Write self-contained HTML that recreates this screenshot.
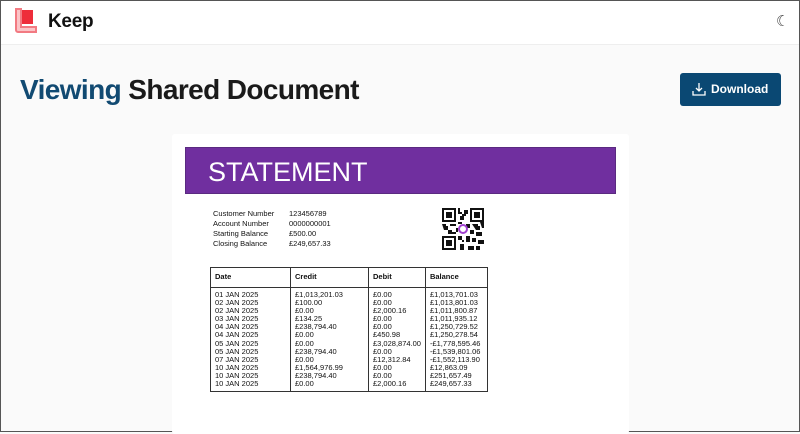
<!DOCTYPE html>
<html><head><meta charset="utf-8"><style>
*{margin:0;padding:0;box-sizing:border-box}
body{width:800px;height:432px;overflow:hidden;background:#fafafa;font-family:"Liberation Sans",Arial,sans-serif;position:relative;border:1px solid #555}
.hdr{position:absolute;left:0;top:0;width:798px;height:44px;background:#fff;border-bottom:1px solid #eee}
.keep{position:absolute;left:47px;top:10px;font-size:19px;font-weight:bold;color:#111;letter-spacing:-0.3px}
.moon{position:absolute;left:775px;top:11px;font-size:15px;color:#444}
h1{position:absolute;left:19px;top:73px;font-size:28px;font-weight:bold;color:#1a1a1a;letter-spacing:-0.6px}
h1 span{color:#114a72}
.btn{position:absolute;left:679px;top:72px;width:101px;height:33px;background:#0a4873;border-radius:3px;color:#fff;font-size:12px;font-weight:bold}
.btn b{position:absolute;left:31px;top:9px}
.card{position:absolute;left:171px;top:133px;width:457px;height:300px;background:#fff;border-radius:3px}
.ban{position:absolute;left:13px;top:13px;width:431px;height:47px;background:#702f9f;border:1px solid #5a2a80}
.ban span{position:absolute;left:22px;top:9px;color:#fff;font-size:27px}
.info{position:absolute;font-size:7.5px;color:#111;line-height:10px}
table{position:absolute;left:38px;top:133px;border-collapse:collapse;font-size:7.5px;color:#111}
td,th{border:1px solid #333;text-align:left;vertical-align:top;padding:0 4px;line-height:8.1px}
th{height:20px;vertical-align:middle;font-weight:bold}
td{padding-top:3px;padding-bottom:3px}
</style></head><body>
<div class="hdr">
<svg style="position:absolute;left:12px;top:6px" width="26" height="28" viewBox="0 0 26 28"><path d="M3 2h5v18h15v5H5a2 2 0 0 1-2-2z" fill="#fbc4c7" stroke="#f27a82" stroke-width="2"/><rect x="9" y="3" width="11" height="14" fill="#ee2d3a"/></svg>
<div class="keep">Keep</div><div class="moon">☾</div></div>
<h1><span>Viewing</span> Shared Document</h1>
<div class="btn"><svg style="position:absolute;left:12px;top:9px" width="14" height="14" viewBox="0 0 14 14" fill="none" stroke="#fff" stroke-width="1.3"><path d="M7 1v8M4 6l3 3 3-3M1 9v4h12V9"/></svg><b>Download</b></div>
<div class="card">
<div class="ban"><span>STATEMENT</span></div>
<div class="info" style="left:41px;top:75px">Customer Number<br>Account Number<br>Starting Balance<br>Closing Balance</div>
<div class="info" style="left:117px;top:75px">123456789<br>0000000001<br>£500.00<br>£249,657.33</div>
<svg style="position:absolute;left:270px;top:74px" width="42" height="42" viewBox="0 0 21 21"><g fill="#111"><path d="M0 0h7v7H0zM14 0h7v7h-7zM0 14h7v7H0z"/></g><g fill="#fff"><path d="M1 1h5v5H1zM15 1h5v5h-5zM1 15h5v5H1z"/></g><g fill="#111"><path d="M2 2h3v3H2zM16 2h3v3h-3zM2 16h3v3H2zM8 0h1v2h1v1H8zM11 1h2v2h-1v1h-1zM9 4h2v2H9zM8 7h2v1H8zM0 8h2v1h1v2H1zM4 8h3v1H4zM12 8h2v2h-2zM15 8h3v1h1v2h-2zM19 7h2v3h-1zM3 11h2v2H3zM14 11h2v2h-2zM17 12h3v2h-3zM8 14h2v2H8zM12 14h2v3h-2zM15 15h2v2h-2zM18 16h3v2h-3zM9 18h2v3H9zM13 19h3v2h-3zM17 19h2v2h-2zM10 3h1v1h-1zM7 10h1v2H7zM5 12h2v1H5zM10 16h1v1h-1zM15 4h-1v2h1z"/></g><circle cx="10.5" cy="10.5" r="2" fill="#fff" stroke="#a040d0" stroke-width="1"/></svg>
<table>
<tr><th style="width:80px">Date</th><th style="width:78px">Credit</th><th style="width:56px">Debit</th><th style="width:62px">Balance</th></tr>
<tr><td>01 JAN 2025<br>02 JAN 2025<br>02 JAN 2025<br>03 JAN 2025<br>04 JAN 2025<br>04 JAN 2025<br>05 JAN 2025<br>05 JAN 2025<br>07 JAN 2025<br>10 JAN 2025<br>10 JAN 2025<br>10 JAN 2025</td>
<td>£1,013,201.03<br>£100.00<br>£0.00<br>£134.25<br>£238,794.40<br>£0.00<br>£0.00<br>£238,794.40<br>£0.00<br>£1,564,976.99<br>£238,794.40<br>£0.00</td>
<td>£0.00<br>£0.00<br>£2,000.16<br>£0.00<br>£0.00<br>£450.98<br>£3,028,874.00<br>£0.00<br>£12,312.84<br>£0.00<br>£0.00<br>£2,000.16</td>
<td>£1,013,701.03<br>£1,013,801.03<br>£1,011,800.87<br>£1,011,935.12<br>£1,250,729.52<br>£1,250,278.54<br>-£1,778,595.46<br>-£1,539,801.06<br>-£1,552,113.90<br>£12,863.09<br>£251,657.49<br>£249,657.33</td></tr>
</table>
</div>
</body></html>
